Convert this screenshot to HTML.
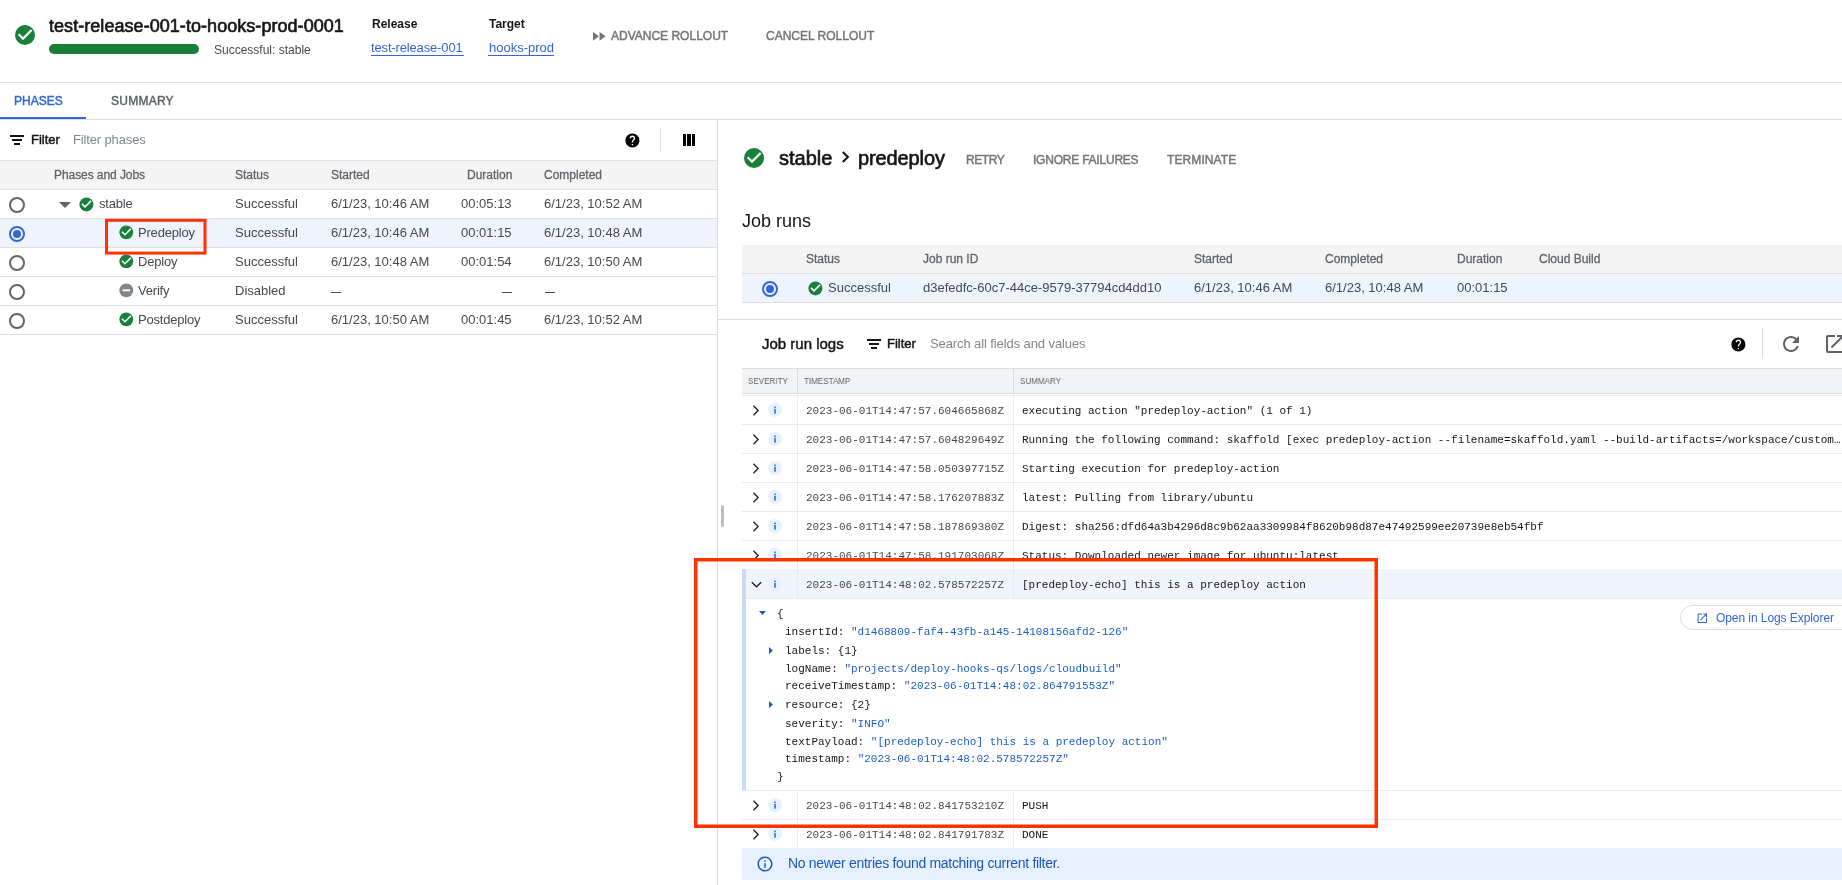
<!DOCTYPE html><html><head><meta charset="utf-8"><style>
html,body{margin:0;padding:0;width:1842px;height:885px;overflow:hidden;background:#fff;}
body{position:relative;font-family:"Liberation Sans", sans-serif;}
.t{position:absolute;white-space:nowrap;will-change:transform;}
.r{position:absolute;}
.i{position:absolute;display:block;overflow:visible;}
</style></head><body>
<svg class="i" style="left:13.0px;top:23.0px" width="24.0" height="24.0" viewBox="0 0 24 24" fill="#000"><circle cx="12" cy="12" r="10" fill="#188038"/><path d="M10 17.2l-5.1-5.1 1.6-1.6 3.5 3.5 7.8-7.8 1.6 1.6z" fill="#fff"/></svg>
<div class="t" style="left:49.00px;top:16.76px;font-size:18px;line-height:18px;color:#141517;letter-spacing:0.05px;-webkit-text-stroke:0.65px currentColor;">test-release-001-to-hooks-prod-0001</div>
<div class="r" style="left:49px;top:44px;width:150px;height:10px;background:#188038;border-radius:5px;"></div>
<div class="t" style="left:214.30px;top:43.84px;font-size:12px;line-height:12px;color:#46494d;">Successful: stable</div>
<div class="t" style="left:371.70px;top:17.54px;font-size:12px;line-height:12px;color:#141517;font-weight:700;">Release</div>
<div class="t" style="left:371.40px;top:41.00px;font-size:13px;line-height:13px;color:#3367d6;letter-spacing:-0.15px;">test-release-001</div>
<div class="r" style="left:371px;top:55px;width:93px;height:1px;background:#3367d6;"></div>
<div class="t" style="left:489.00px;top:17.54px;font-size:12px;line-height:12px;color:#141517;font-weight:700;">Target</div>
<div class="t" style="left:488.70px;top:41.00px;font-size:13px;line-height:13px;color:#3367d6;">hooks-prod</div>
<div class="r" style="left:488px;top:55px;width:66px;height:1px;background:#3367d6;"></div>
<svg class="i" style="left:593px;top:31.5px" width="13" height="8.7" viewBox="0 0 13 8.7" fill="#757575"><path d="M0 0l6 4.35L0 8.7z M6.6 0l6 4.35L6.6 8.7z"/></svg>
<div class="t" style="left:611.30px;top:30.04px;font-size:12px;line-height:12px;color:#757575;-webkit-text-stroke:0.45px currentColor;">ADVANCE ROLLOUT</div>
<div class="t" style="left:765.50px;top:30.04px;font-size:12px;line-height:12px;color:#757575;-webkit-text-stroke:0.45px currentColor;">CANCEL ROLLOUT</div>
<div class="r" style="left:0px;top:82px;width:1842px;height:1px;background:#dadce0;"></div>
<div class="t" style="left:13.60px;top:95.04px;font-size:12px;line-height:12px;color:#3367d6;-webkit-text-stroke:0.45px currentColor;">PHASES</div>
<div class="t" style="left:110.50px;top:95.04px;font-size:12px;line-height:12px;color:#5f6368;letter-spacing:0.25px;-webkit-text-stroke:0.45px currentColor;">SUMMARY</div>
<div class="r" style="left:0px;top:119px;width:1842px;height:1px;background:#dadce0;"></div>
<div class="r" style="left:0px;top:117px;width:86px;height:2px;background:#3367d6;"></div>
<div class="r" style="left:717px;top:120px;width:1px;height:765px;background:#dadce0;"></div>
<div class="r" style="left:10px;top:135px;width:14px;height:2px;background:#141517;"></div>
<div class="r" style="left:12px;top:139px;width:10px;height:2px;background:#141517;"></div>
<div class="r" style="left:14px;top:143px;width:6px;height:2px;background:#141517;"></div>
<div class="t" style="left:30.60px;top:133.00px;font-size:13px;line-height:13px;color:#141517;-webkit-text-stroke:0.45px currentColor;">Filter</div>
<div class="t" style="left:73.40px;top:133.00px;font-size:13px;line-height:13px;color:#80868b;letter-spacing:-0.14px;">Filter phases</div>
<svg class="i" style="left:623.6px;top:131.6px" width="16.8" height="16.8" viewBox="0 0 24 24" fill="#000"><path d="M12 2C6.48 2 2 6.48 2 12s4.48 10 10 10 10-4.48 10-10S17.52 2 12 2zm1 17h-2v-2h2v2zm2.07-7.75l-.9.92C13.45 12.9 13 13.5 13 15h-2v-.5c0-1.1.45-2.1 1.17-2.83l1.24-1.26c.37-.36.59-.86.59-1.41 0-1.1-.9-2-2-2s-2 .9-2 2H8c0-2.21 1.79-4 4-4s4 1.79 4 4c0 .88-.36 1.68-.93 2.25z"/></svg>
<div class="r" style="left:660px;top:128px;width:1px;height:24px;background:#dadce0;"></div>
<div class="r" style="left:683px;top:134px;width:3px;height:12px;background:#000;"></div>
<div class="r" style="left:687px;top:134px;width:4px;height:12px;background:#000;"></div>
<div class="r" style="left:692px;top:134px;width:3px;height:12px;background:#000;"></div>
<div class="r" style="left:0px;top:160px;width:717px;height:29px;background:#f4f4f4;"></div>
<div class="r" style="left:0px;top:160px;width:717px;height:1px;background:#e0e0e0;"></div>
<div class="r" style="left:0px;top:189px;width:717px;height:1px;background:#e0e0e0;"></div>
<div class="t" style="left:53.60px;top:168.84px;font-size:12px;line-height:12px;color:#5f6368;letter-spacing:-0.07px;-webkit-text-stroke:0.28px currentColor;">Phases and Jobs</div>
<div class="t" style="left:235.00px;top:168.84px;font-size:12px;line-height:12px;color:#5f6368;-webkit-text-stroke:0.28px currentColor;">Status</div>
<div class="t" style="left:330.70px;top:168.84px;font-size:12px;line-height:12px;color:#5f6368;-webkit-text-stroke:0.28px currentColor;">Started</div>
<div class="t" style="left:466.80px;top:168.84px;font-size:12px;line-height:12px;color:#5f6368;-webkit-text-stroke:0.28px currentColor;">Duration</div>
<div class="t" style="left:544.30px;top:168.84px;font-size:12px;line-height:12px;color:#5f6368;-webkit-text-stroke:0.28px currentColor;">Completed</div>
<div class="r" style="left:0px;top:218px;width:717px;height:1px;background:#e0e0e0;"></div>
<svg class="i" style="left:9px;top:196.7px" width="16" height="16" viewBox="0 0 16 16" fill="#000"><circle cx="8" cy="8" r="7" fill="none" stroke="#636466" stroke-width="2"/></svg>
<svg class="i" style="left:59px;top:202px" width="12" height="6" viewBox="0 0 12 6" fill="#5f6368"><path d="M0 0h12L6 6z"/></svg>
<svg class="i" style="left:77.6px;top:195.6px" width="16.8" height="16.8" viewBox="0 0 24 24" fill="#000"><circle cx="12" cy="12" r="10" fill="#188038"/><path d="M10 17.2l-5.1-5.1 1.6-1.6 3.5 3.5 7.8-7.8 1.6 1.6z" fill="#fff"/></svg>
<div class="t" style="left:98.70px;top:196.90px;font-size:13px;line-height:13px;color:#46494d;letter-spacing:-0.2px;">stable</div>
<div class="t" style="left:235.00px;top:196.90px;font-size:13px;line-height:13px;color:#46494d;">Successful</div>
<div class="t" style="left:330.70px;top:196.90px;font-size:13px;line-height:13px;color:#46494d;">6/1/23, 10:46 AM</div>
<div class="t" style="right:1330px;top:196.90px;font-size:13px;line-height:13px;color:#46494d">00:05:13</div>
<div class="t" style="left:544.30px;top:196.90px;font-size:13px;line-height:13px;color:#46494d;">6/1/23, 10:52 AM</div>
<div class="r" style="left:0px;top:219px;width:717px;height:28px;background:#eef3fd;"></div>
<div class="r" style="left:0px;top:247px;width:717px;height:1px;background:#e0e0e0;"></div>
<svg class="i" style="left:9px;top:225.7px" width="16" height="16" viewBox="0 0 16 16" fill="#000"><circle cx="8" cy="8" r="7" fill="none" stroke="#3367d6" stroke-width="2"/><circle cx="8" cy="8" r="4" fill="#3367d6"/></svg>
<svg class="i" style="left:117.72px;top:224.32px" width="16.560000000000002" height="16.560000000000002" viewBox="0 0 24 24" fill="#000"><circle cx="12" cy="12" r="10" fill="#188038"/><path d="M10 17.2l-5.1-5.1 1.6-1.6 3.5 3.5 7.8-7.8 1.6 1.6z" fill="#fff"/></svg>
<div class="t" style="left:138.00px;top:225.90px;font-size:13px;line-height:13px;color:#46494d;letter-spacing:-0.2px;">Predeploy</div>
<div class="t" style="left:235.00px;top:225.90px;font-size:13px;line-height:13px;color:#46494d;">Successful</div>
<div class="t" style="left:330.70px;top:225.90px;font-size:13px;line-height:13px;color:#46494d;">6/1/23, 10:46 AM</div>
<div class="t" style="right:1330px;top:225.90px;font-size:13px;line-height:13px;color:#46494d">00:01:15</div>
<div class="t" style="left:544.30px;top:225.90px;font-size:13px;line-height:13px;color:#46494d;">6/1/23, 10:48 AM</div>
<div class="r" style="left:0px;top:276px;width:717px;height:1px;background:#e0e0e0;"></div>
<svg class="i" style="left:9px;top:254.7px" width="16" height="16" viewBox="0 0 16 16" fill="#000"><circle cx="8" cy="8" r="7" fill="none" stroke="#636466" stroke-width="2"/></svg>
<svg class="i" style="left:117.72px;top:253.32000000000002px" width="16.560000000000002" height="16.560000000000002" viewBox="0 0 24 24" fill="#000"><circle cx="12" cy="12" r="10" fill="#188038"/><path d="M10 17.2l-5.1-5.1 1.6-1.6 3.5 3.5 7.8-7.8 1.6 1.6z" fill="#fff"/></svg>
<div class="t" style="left:138.00px;top:254.90px;font-size:13px;line-height:13px;color:#46494d;letter-spacing:-0.2px;">Deploy</div>
<div class="t" style="left:235.00px;top:254.90px;font-size:13px;line-height:13px;color:#46494d;">Successful</div>
<div class="t" style="left:330.70px;top:254.90px;font-size:13px;line-height:13px;color:#46494d;">6/1/23, 10:48 AM</div>
<div class="t" style="right:1330px;top:254.90px;font-size:13px;line-height:13px;color:#46494d">00:01:54</div>
<div class="t" style="left:544.30px;top:254.90px;font-size:13px;line-height:13px;color:#46494d;">6/1/23, 10:50 AM</div>
<div class="r" style="left:0px;top:305px;width:717px;height:1px;background:#e0e0e0;"></div>
<svg class="i" style="left:9px;top:283.7px" width="16" height="16" viewBox="0 0 16 16" fill="#000"><circle cx="8" cy="8" r="7" fill="none" stroke="#636466" stroke-width="2"/></svg>
<svg class="i" style="left:117.7px;top:282.3px" width="16.6" height="16.6" viewBox="0 0 24 24" fill="#000"><circle cx="12" cy="12" r="10" fill="#80868b"/><rect x="6.5" y="10.6" width="11" height="2.8" fill="#fff"/></svg>
<div class="t" style="left:138.00px;top:283.90px;font-size:13px;line-height:13px;color:#46494d;letter-spacing:-0.2px;">Verify</div>
<div class="t" style="left:235.00px;top:283.90px;font-size:13px;line-height:13px;color:#46494d;">Disabled</div>
<div class="r" style="left:330.5px;top:291.5px;width:10px;height:1px;background:#46494d;"></div>
<div class="r" style="left:502px;top:291.5px;width:10px;height:1px;background:#46494d;"></div>
<div class="r" style="left:544.5px;top:291.5px;width:10px;height:1px;background:#46494d;"></div>
<div class="r" style="left:0px;top:334px;width:717px;height:1px;background:#e0e0e0;"></div>
<svg class="i" style="left:9px;top:312.7px" width="16" height="16" viewBox="0 0 16 16" fill="#000"><circle cx="8" cy="8" r="7" fill="none" stroke="#636466" stroke-width="2"/></svg>
<svg class="i" style="left:117.72px;top:311.32000000000005px" width="16.560000000000002" height="16.560000000000002" viewBox="0 0 24 24" fill="#000"><circle cx="12" cy="12" r="10" fill="#188038"/><path d="M10 17.2l-5.1-5.1 1.6-1.6 3.5 3.5 7.8-7.8 1.6 1.6z" fill="#fff"/></svg>
<div class="t" style="left:138.00px;top:312.90px;font-size:13px;line-height:13px;color:#46494d;letter-spacing:-0.2px;">Postdeploy</div>
<div class="t" style="left:235.00px;top:312.90px;font-size:13px;line-height:13px;color:#46494d;">Successful</div>
<div class="t" style="left:330.70px;top:312.90px;font-size:13px;line-height:13px;color:#46494d;">6/1/23, 10:50 AM</div>
<div class="t" style="right:1330px;top:312.90px;font-size:13px;line-height:13px;color:#46494d">00:01:45</div>
<div class="t" style="left:544.30px;top:312.90px;font-size:13px;line-height:13px;color:#46494d;">6/1/23, 10:52 AM</div>
<svg class="i" style="left:742.0px;top:146.0px" width="24.0" height="24.0" viewBox="0 0 24 24" fill="#000"><circle cx="12" cy="12" r="10" fill="#188038"/><path d="M10 17.2l-5.1-5.1 1.6-1.6 3.5 3.5 7.8-7.8 1.6 1.6z" fill="#fff"/></svg>
<div class="t" style="left:778.60px;top:148.07px;font-size:20px;line-height:20px;color:#141517;-webkit-text-stroke:0.65px currentColor;">stable</div>
<svg class="i" style="left:838.5px;top:151px" width="12" height="12" viewBox="0 0 12 12" fill="#000"><path d="M3.8 0.9L8.9 6 3.8 11.1" fill="none" stroke="#141517" stroke-width="2.1"/></svg>
<div class="t" style="left:857.80px;top:148.07px;font-size:20px;line-height:20px;color:#141517;letter-spacing:-0.12px;-webkit-text-stroke:0.65px currentColor;">predeploy</div>
<div class="t" style="left:965.50px;top:153.84px;font-size:12px;line-height:12px;color:#757575;letter-spacing:-0.4px;-webkit-text-stroke:0.45px currentColor;">RETRY</div>
<div class="t" style="left:1032.70px;top:153.84px;font-size:12px;line-height:12px;color:#757575;letter-spacing:-0.22px;-webkit-text-stroke:0.45px currentColor;">IGNORE FAILURES</div>
<div class="t" style="left:1167.40px;top:153.84px;font-size:12px;line-height:12px;color:#757575;letter-spacing:0.1px;-webkit-text-stroke:0.45px currentColor;">TERMINATE</div>
<div class="t" style="left:742.40px;top:211.76px;font-size:18px;line-height:18px;color:#141517;">Job runs</div>
<div class="r" style="left:742px;top:245px;width:1100px;height:28px;background:#f4f4f4;"></div>
<div class="r" style="left:742px;top:273px;width:1100px;height:1px;background:#e0e0e0;"></div>
<div class="r" style="left:742px;top:274px;width:1100px;height:28px;background:#eef3fd;"></div>
<div class="r" style="left:742px;top:302px;width:1100px;height:1px;background:#e0e0e0;"></div>
<div class="t" style="left:806.40px;top:252.64px;font-size:12px;line-height:12px;color:#5f6368;-webkit-text-stroke:0.28px currentColor;">Status</div>
<div class="t" style="left:923.00px;top:252.64px;font-size:12px;line-height:12px;color:#5f6368;-webkit-text-stroke:0.28px currentColor;">Job run ID</div>
<div class="t" style="left:1193.70px;top:252.64px;font-size:12px;line-height:12px;color:#5f6368;-webkit-text-stroke:0.28px currentColor;">Started</div>
<div class="t" style="left:1325.40px;top:252.64px;font-size:12px;line-height:12px;color:#5f6368;-webkit-text-stroke:0.28px currentColor;">Completed</div>
<div class="t" style="left:1456.80px;top:252.64px;font-size:12px;line-height:12px;color:#5f6368;-webkit-text-stroke:0.28px currentColor;">Duration</div>
<div class="t" style="left:1539.00px;top:252.64px;font-size:12px;line-height:12px;color:#5f6368;-webkit-text-stroke:0.28px currentColor;">Cloud Build</div>
<svg class="i" style="left:762px;top:280.5px" width="16" height="16" viewBox="0 0 16 16" fill="#000"><circle cx="8" cy="8" r="7" fill="none" stroke="#3367d6" stroke-width="2"/><circle cx="8" cy="8" r="4" fill="#3367d6"/></svg>
<svg class="i" style="left:806.6px;top:279.6px" width="16.8" height="16.8" viewBox="0 0 24 24" fill="#000"><circle cx="12" cy="12" r="10" fill="#188038"/><path d="M10 17.2l-5.1-5.1 1.6-1.6 3.5 3.5 7.8-7.8 1.6 1.6z" fill="#fff"/></svg>
<div class="t" style="left:827.50px;top:281.00px;font-size:13px;line-height:13px;color:#46494d;">Successful</div>
<div class="t" style="left:922.80px;top:281.00px;font-size:13px;line-height:13px;color:#46494d;">d3efedfc-60c7-44ce-9579-37794cd4dd10</div>
<div class="t" style="left:1193.70px;top:281.00px;font-size:13px;line-height:13px;color:#46494d;">6/1/23, 10:46 AM</div>
<div class="t" style="left:1325.40px;top:281.00px;font-size:13px;line-height:13px;color:#46494d;">6/1/23, 10:48 AM</div>
<div class="t" style="left:1456.80px;top:281.00px;font-size:13px;line-height:13px;color:#46494d;">00:01:15</div>
<div class="r" style="left:717px;top:319px;width:1125px;height:1px;background:#dadce0;"></div>
<div class="t" style="left:762.40px;top:335.70px;font-size:15px;line-height:15px;color:#141517;-webkit-text-stroke:0.45px currentColor;">Job run logs</div>
<div class="r" style="left:867px;top:339px;width:14px;height:2px;background:#141517;"></div>
<div class="r" style="left:869px;top:343px;width:10px;height:2px;background:#141517;"></div>
<div class="r" style="left:871px;top:347px;width:6px;height:2px;background:#141517;"></div>
<div class="t" style="left:887.40px;top:337.20px;font-size:13px;line-height:13px;color:#141517;-webkit-text-stroke:0.45px currentColor;">Filter</div>
<div class="t" style="left:930.40px;top:337.20px;font-size:13px;line-height:13px;color:#80868b;letter-spacing:-0.1px;">Search all fields and values</div>
<svg class="i" style="left:1729.6px;top:335.6px" width="16.8" height="16.8" viewBox="0 0 24 24" fill="#000"><path d="M12 2C6.48 2 2 6.48 2 12s4.48 10 10 10 10-4.48 10-10S17.52 2 12 2zm1 17h-2v-2h2v2zm2.07-7.75l-.9.92C13.45 12.9 13 13.5 13 15h-2v-.5c0-1.1.45-2.1 1.17-2.83l1.24-1.26c.37-.36.59-.86.59-1.41 0-1.1-.9-2-2-2s-2 .9-2 2H8c0-2.21 1.79-4 4-4s4 1.79 4 4c0 .88-.36 1.68-.93 2.25z"/></svg>
<div class="r" style="left:1762px;top:328px;width:1px;height:31px;background:#dadce0;"></div>
<svg class="i" style="left:1779px;top:332px" width="24" height="24" viewBox="0 0 24 24" fill="#5f6368"><path d="M17.65 6.35C16.2 4.9 14.21 4 12 4c-4.42 0-7.99 3.58-7.99 8s3.57 8 7.99 8c3.730 0 6.84-2.55 7.73-6h-2.08c-.82 2.33-3.04 4-5.65 4-3.31 0-6-2.69-6-6s2.69-6 6-6c1.66 0 3.14.69 4.22 1.78L13 11h7V4l-2.35 2.35z"/></svg>
<svg class="i" style="left:1823px;top:332px" width="24" height="24" viewBox="0 0 24 24" fill="#5f6368"><path d="M19 19H5V5h7V3H5c-1.11 0-2 .9-2 2v14c0 1.1.89 2 2 2h14c1.1 0 2-.9 2-2v-7h-2v7zM14 3v2h3.59l-9.83 9.83 1.41 1.41L19 6.41V10h2V3h-7z"/></svg>
<div class="r" style="left:742px;top:368px;width:1100px;height:1px;background:#dadce0;"></div>
<div class="r" style="left:742px;top:369px;width:1100px;height:24px;background:#f1f3f4;"></div>
<div class="r" style="left:742px;top:393px;width:1100px;height:1px;background:#dadce0;"></div>
<div class="r" style="left:797px;top:369px;width:1px;height:24px;background:#dadce0;"></div>
<div class="r" style="left:1013px;top:369px;width:1px;height:24px;background:#dadce0;"></div>
<div class="r" style="left:742px;top:395px;width:1100px;height:1px;background:#e8eaed;"></div>
<div class="t" style="left:748.00px;top:375.87px;font-size:9.6px;line-height:9.6px;color:#5f6368;transform:scaleX(0.84);transform-origin:0 0;">SEVERITY</div>
<div class="t" style="left:804.40px;top:375.87px;font-size:9.6px;line-height:9.6px;color:#5f6368;transform:scaleX(0.84);transform-origin:0 0;">TIMESTAMP</div>
<div class="t" style="left:1019.70px;top:375.87px;font-size:9.6px;line-height:9.6px;color:#5f6368;transform:scaleX(0.84);transform-origin:0 0;">SUMMARY</div>
<div class="r" style="left:797px;top:395px;width:1px;height:29px;background:#e8eaed;"></div>
<div class="r" style="left:1013px;top:395px;width:1px;height:29px;background:#e8eaed;"></div>
<svg class="i" style="left:751.5px;top:404.5px" width="8" height="11" viewBox="0 0 8 11" fill="#000"><path d="M1.5 0.8l4.6 4.7L1.5 10.2" fill="none" stroke="#202124" stroke-width="1.35"/></svg>
<svg class="i" style="left:768px;top:402.5px" width="14" height="14" viewBox="0 0 14 14" fill="#000"><circle cx="7" cy="7" r="7" fill="#e8f0fe"/><rect x="6.2" y="3.6" width="1.6" height="1.6" fill="#1a73e8"/><rect x="6.2" y="6" width="1.6" height="4.6" fill="#1a73e8"/></svg>
<div class="t" style="left:806.00px;top:405.57px;font-size:11px;line-height:11px;color:#46494d;font-family:'Liberation Mono', monospace;">2023-06-01T14:47:57.604665868Z</div>
<div class="t" style="left:1022.00px;top:405.57px;font-size:11px;line-height:11px;color:#141517;font-family:'Liberation Mono', monospace;">executing action "predeploy-action" (1 of 1)</div>
<div class="r" style="left:742px;top:424px;width:1100px;height:1px;background:#e8eaed;"></div>
<div class="r" style="left:797px;top:424px;width:1px;height:29px;background:#e8eaed;"></div>
<div class="r" style="left:1013px;top:424px;width:1px;height:29px;background:#e8eaed;"></div>
<svg class="i" style="left:751.5px;top:433.5px" width="8" height="11" viewBox="0 0 8 11" fill="#000"><path d="M1.5 0.8l4.6 4.7L1.5 10.2" fill="none" stroke="#202124" stroke-width="1.35"/></svg>
<svg class="i" style="left:768px;top:431.5px" width="14" height="14" viewBox="0 0 14 14" fill="#000"><circle cx="7" cy="7" r="7" fill="#e8f0fe"/><rect x="6.2" y="3.6" width="1.6" height="1.6" fill="#1a73e8"/><rect x="6.2" y="6" width="1.6" height="4.6" fill="#1a73e8"/></svg>
<div class="t" style="left:806.00px;top:434.57px;font-size:11px;line-height:11px;color:#46494d;font-family:'Liberation Mono', monospace;">2023-06-01T14:47:57.604829649Z</div>
<div class="t" style="left:1022.00px;top:434.57px;font-size:11px;line-height:11px;color:#141517;font-family:'Liberation Mono', monospace;">Running the following command: skaffold [exec predeploy-action --filename=skaffold.yaml --build-artifacts=/workspace/custom…</div>
<div class="r" style="left:742px;top:453px;width:1100px;height:1px;background:#e8eaed;"></div>
<div class="r" style="left:797px;top:453px;width:1px;height:29px;background:#e8eaed;"></div>
<div class="r" style="left:1013px;top:453px;width:1px;height:29px;background:#e8eaed;"></div>
<svg class="i" style="left:751.5px;top:462.5px" width="8" height="11" viewBox="0 0 8 11" fill="#000"><path d="M1.5 0.8l4.6 4.7L1.5 10.2" fill="none" stroke="#202124" stroke-width="1.35"/></svg>
<svg class="i" style="left:768px;top:460.5px" width="14" height="14" viewBox="0 0 14 14" fill="#000"><circle cx="7" cy="7" r="7" fill="#e8f0fe"/><rect x="6.2" y="3.6" width="1.6" height="1.6" fill="#1a73e8"/><rect x="6.2" y="6" width="1.6" height="4.6" fill="#1a73e8"/></svg>
<div class="t" style="left:806.00px;top:463.57px;font-size:11px;line-height:11px;color:#46494d;font-family:'Liberation Mono', monospace;">2023-06-01T14:47:58.050397715Z</div>
<div class="t" style="left:1022.00px;top:463.57px;font-size:11px;line-height:11px;color:#141517;font-family:'Liberation Mono', monospace;">Starting execution for predeploy-action</div>
<div class="r" style="left:742px;top:482px;width:1100px;height:1px;background:#e8eaed;"></div>
<div class="r" style="left:797px;top:482px;width:1px;height:29px;background:#e8eaed;"></div>
<div class="r" style="left:1013px;top:482px;width:1px;height:29px;background:#e8eaed;"></div>
<svg class="i" style="left:751.5px;top:491.5px" width="8" height="11" viewBox="0 0 8 11" fill="#000"><path d="M1.5 0.8l4.6 4.7L1.5 10.2" fill="none" stroke="#202124" stroke-width="1.35"/></svg>
<svg class="i" style="left:768px;top:489.5px" width="14" height="14" viewBox="0 0 14 14" fill="#000"><circle cx="7" cy="7" r="7" fill="#e8f0fe"/><rect x="6.2" y="3.6" width="1.6" height="1.6" fill="#1a73e8"/><rect x="6.2" y="6" width="1.6" height="4.6" fill="#1a73e8"/></svg>
<div class="t" style="left:806.00px;top:492.57px;font-size:11px;line-height:11px;color:#46494d;font-family:'Liberation Mono', monospace;">2023-06-01T14:47:58.176207883Z</div>
<div class="t" style="left:1022.00px;top:492.57px;font-size:11px;line-height:11px;color:#141517;font-family:'Liberation Mono', monospace;">latest: Pulling from library/ubuntu</div>
<div class="r" style="left:742px;top:511px;width:1100px;height:1px;background:#e8eaed;"></div>
<div class="r" style="left:797px;top:511px;width:1px;height:29px;background:#e8eaed;"></div>
<div class="r" style="left:1013px;top:511px;width:1px;height:29px;background:#e8eaed;"></div>
<svg class="i" style="left:751.5px;top:520.5px" width="8" height="11" viewBox="0 0 8 11" fill="#000"><path d="M1.5 0.8l4.6 4.7L1.5 10.2" fill="none" stroke="#202124" stroke-width="1.35"/></svg>
<svg class="i" style="left:768px;top:518.5px" width="14" height="14" viewBox="0 0 14 14" fill="#000"><circle cx="7" cy="7" r="7" fill="#e8f0fe"/><rect x="6.2" y="3.6" width="1.6" height="1.6" fill="#1a73e8"/><rect x="6.2" y="6" width="1.6" height="4.6" fill="#1a73e8"/></svg>
<div class="t" style="left:806.00px;top:521.57px;font-size:11px;line-height:11px;color:#46494d;font-family:'Liberation Mono', monospace;">2023-06-01T14:47:58.187869380Z</div>
<div class="t" style="left:1022.00px;top:521.57px;font-size:11px;line-height:11px;color:#141517;font-family:'Liberation Mono', monospace;">Digest: sha256:dfd64a3b4296d8c9b62aa3309984f8620b98d87e47492599ee20739e8eb54fbf</div>
<div class="r" style="left:742px;top:540px;width:1100px;height:1px;background:#e8eaed;"></div>
<div class="r" style="left:797px;top:540px;width:1px;height:29px;background:#e8eaed;"></div>
<div class="r" style="left:1013px;top:540px;width:1px;height:29px;background:#e8eaed;"></div>
<svg class="i" style="left:751.5px;top:549.5px" width="8" height="11" viewBox="0 0 8 11" fill="#000"><path d="M1.5 0.8l4.6 4.7L1.5 10.2" fill="none" stroke="#202124" stroke-width="1.35"/></svg>
<svg class="i" style="left:768px;top:547.5px" width="14" height="14" viewBox="0 0 14 14" fill="#000"><circle cx="7" cy="7" r="7" fill="#e8f0fe"/><rect x="6.2" y="3.6" width="1.6" height="1.6" fill="#1a73e8"/><rect x="6.2" y="6" width="1.6" height="4.6" fill="#1a73e8"/></svg>
<div class="t" style="left:806.00px;top:550.57px;font-size:11px;line-height:11px;color:#46494d;font-family:'Liberation Mono', monospace;">2023-06-01T14:47:58.191703068Z</div>
<div class="t" style="left:1022.00px;top:550.57px;font-size:11px;line-height:11px;color:#141517;font-family:'Liberation Mono', monospace;">Status: Downloaded newer image for ubuntu:latest</div>
<div class="r" style="left:742px;top:569px;width:1100px;height:1px;background:#e8eaed;"></div>
<div class="r" style="left:742px;top:569px;width:1100px;height:29px;background:#f0f4fc;"></div>
<div class="r" style="left:797px;top:569px;width:1px;height:29px;background:#e8eaed;"></div>
<div class="r" style="left:1013px;top:569px;width:1px;height:29px;background:#e8eaed;"></div>
<svg class="i" style="left:750.5px;top:580.5px" width="10" height="7" viewBox="0 0 10 7" fill="#000"><path d="M0.8 1.2l4.7 4.6 4.7-4.6" fill="none" stroke="#202124" stroke-width="1.35"/></svg>
<svg class="i" style="left:768px;top:576.5px" width="14" height="14" viewBox="0 0 14 14" fill="#000"><circle cx="7" cy="7" r="7" fill="#e8f0fe"/><rect x="6.2" y="3.6" width="1.6" height="1.6" fill="#1a73e8"/><rect x="6.2" y="6" width="1.6" height="4.6" fill="#1a73e8"/></svg>
<div class="t" style="left:806.00px;top:579.57px;font-size:11px;line-height:11px;color:#46494d;font-family:'Liberation Mono', monospace;">2023-06-01T14:48:02.578572257Z</div>
<div class="t" style="left:1022.00px;top:579.57px;font-size:11px;line-height:11px;color:#141517;font-family:'Liberation Mono', monospace;">[predeploy-echo] this is a predeploy action</div>
<div class="r" style="left:742px;top:598px;width:1100px;height:1px;background:#e8eaed;"></div>
<div class="r" style="left:742px;top:569px;width:4px;height:221px;background:#c6dafc;"></div>
<svg class="i" style="left:759.3px;top:611px" width="7" height="4" viewBox="0 0 7 4" fill="#1a5fc8"><path d="M0 0h7L3.5 4z"/></svg>
<div class="t" style="left:777.40px;top:608.77px;font-size:11px;line-height:11px;color:#141517;font-family:'Liberation Mono', monospace;">{</div>
<div class="t" style="left:784.80px;top:626.67px;font-size:11px;line-height:11px;color:#141517;font-family:'Liberation Mono', monospace;">insertId: <span style="color:#1a5fc8">"d1468809-faf4-43fb-a145-14108156afd2-126"</span></div>
<div class="t" style="left:784.80px;top:645.67px;font-size:11px;line-height:11px;color:#141517;font-family:'Liberation Mono', monospace;">labels: {1}</div>
<svg class="i" style="left:769.2px;top:646.5px" width="4" height="7.2" viewBox="0 0 4 7.2" fill="#1a5fc8"><path d="M0 0l4 3.6L0 7.2z"/></svg>
<div class="t" style="left:784.80px;top:663.57px;font-size:11px;line-height:11px;color:#141517;font-family:'Liberation Mono', monospace;">logName: <span style="color:#1a5fc8">"projects/deploy-hooks-qs/logs/cloudbuild"</span></div>
<div class="t" style="left:784.80px;top:681.37px;font-size:11px;line-height:11px;color:#141517;font-family:'Liberation Mono', monospace;">receiveTimestamp: <span style="color:#1a5fc8">"2023-06-01T14:48:02.864791553Z"</span></div>
<div class="t" style="left:784.80px;top:700.37px;font-size:11px;line-height:11px;color:#141517;font-family:'Liberation Mono', monospace;">resource: {2}</div>
<svg class="i" style="left:769.2px;top:701.1999999999999px" width="4" height="7.2" viewBox="0 0 4 7.2" fill="#1a5fc8"><path d="M0 0l4 3.6L0 7.2z"/></svg>
<div class="t" style="left:784.80px;top:718.57px;font-size:11px;line-height:11px;color:#141517;font-family:'Liberation Mono', monospace;">severity: <span style="color:#1a5fc8">"INFO"</span></div>
<div class="t" style="left:784.80px;top:736.57px;font-size:11px;line-height:11px;color:#141517;font-family:'Liberation Mono', monospace;">textPayload: <span style="color:#1a5fc8">"[predeploy-echo] this is a predeploy action"</span></div>
<div class="t" style="left:784.80px;top:754.37px;font-size:11px;line-height:11px;color:#141517;font-family:'Liberation Mono', monospace;">timestamp: <span style="color:#1a5fc8">"2023-06-01T14:48:02.578572257Z"</span></div>
<div class="t" style="left:777.20px;top:772.27px;font-size:11px;line-height:11px;color:#141517;font-family:'Liberation Mono', monospace;">}</div>
<div class="r" style="left:1680px;top:605px;width:200px;height:23px;border:1px solid #dadce0;border-radius:13px;"></div>
<svg class="i" style="left:1695.7px;top:611.5px" width="12.6" height="12.6" viewBox="0 0 24 24" fill="#3367d6"><path d="M19 19H5V5h7V3H5c-1.11 0-2 .9-2 2v14c0 1.1.89 2 2 2h14c1.1 0 2-.9 2-2v-7h-2v7zM14 3v2h3.59l-9.83 9.83 1.41 1.41L19 6.41V10h2V3h-7z"/></svg>
<div class="t" style="left:1715.80px;top:611.84px;font-size:12px;line-height:12px;color:#3367d6;letter-spacing:-0.07px;">Open in Logs Explorer</div>
<div class="r" style="left:742px;top:790px;width:1100px;height:1px;background:#e8eaed;"></div>
<div class="r" style="left:797px;top:790px;width:1px;height:29px;background:#e8eaed;"></div>
<div class="r" style="left:1013px;top:790px;width:1px;height:29px;background:#e8eaed;"></div>
<svg class="i" style="left:751.5px;top:799.5px" width="8" height="11" viewBox="0 0 8 11" fill="#000"><path d="M1.5 0.8l4.6 4.7L1.5 10.2" fill="none" stroke="#202124" stroke-width="1.35"/></svg>
<svg class="i" style="left:768px;top:797.5px" width="14" height="14" viewBox="0 0 14 14" fill="#000"><circle cx="7" cy="7" r="7" fill="#e8f0fe"/><rect x="6.2" y="3.6" width="1.6" height="1.6" fill="#1a73e8"/><rect x="6.2" y="6" width="1.6" height="4.6" fill="#1a73e8"/></svg>
<div class="t" style="left:806.00px;top:800.57px;font-size:11px;line-height:11px;color:#46494d;font-family:'Liberation Mono', monospace;">2023-06-01T14:48:02.841753210Z</div>
<div class="t" style="left:1022.00px;top:800.57px;font-size:11px;line-height:11px;color:#141517;font-family:'Liberation Mono', monospace;">PUSH</div>
<div class="r" style="left:742px;top:819px;width:1100px;height:1px;background:#e8eaed;"></div>
<div class="r" style="left:797px;top:819px;width:1px;height:29px;background:#e8eaed;"></div>
<div class="r" style="left:1013px;top:819px;width:1px;height:29px;background:#e8eaed;"></div>
<svg class="i" style="left:751.5px;top:828.5px" width="8" height="11" viewBox="0 0 8 11" fill="#000"><path d="M1.5 0.8l4.6 4.7L1.5 10.2" fill="none" stroke="#202124" stroke-width="1.35"/></svg>
<svg class="i" style="left:768px;top:826.5px" width="14" height="14" viewBox="0 0 14 14" fill="#000"><circle cx="7" cy="7" r="7" fill="#e8f0fe"/><rect x="6.2" y="3.6" width="1.6" height="1.6" fill="#1a73e8"/><rect x="6.2" y="6" width="1.6" height="4.6" fill="#1a73e8"/></svg>
<div class="t" style="left:806.00px;top:829.57px;font-size:11px;line-height:11px;color:#46494d;font-family:'Liberation Mono', monospace;">2023-06-01T14:48:02.841791783Z</div>
<div class="t" style="left:1022.00px;top:829.57px;font-size:11px;line-height:11px;color:#141517;font-family:'Liberation Mono', monospace;">DONE</div>
<div class="r" style="left:742px;top:848px;width:1100px;height:1px;background:#e8eaed;"></div>
<div class="r" style="left:742px;top:848px;width:1100px;height:32px;background:#e8f0fe;"></div>
<svg class="i" style="left:756px;top:855px" width="18" height="18" viewBox="0 0 24 24" fill="#185abc"><path d="M11 7h2v2h-2zm0 4h2v6h-2zm1-9C6.48 2 2 6.48 2 12s4.48 10 10 10 10-4.48 10-10S17.52 2 12 2zm0 18c-4.41 0-8-3.59-8-8s3.59-8 8-8 8 3.59 8 8-3.59 8-8 8z"/></svg>
<div class="t" style="left:788.40px;top:856.15px;font-size:14px;line-height:14px;color:#185abc;letter-spacing:-0.31px;">No newer entries found matching current filter.</div>
<div class="r" style="left:721px;top:505px;width:3px;height:22px;background:#bdbdbd;border-radius:2px;"></div>
<svg class="i" style="left:0;top:0" width="1842" height="885"><rect x="695.75" y="559.75" width="680.5" height="266.5" fill="none" stroke="#ff3300" stroke-width="3.5"/><rect x="106.5" y="220.3" width="98.5" height="32.8" fill="none" stroke="#ff3300" stroke-width="3"/></svg>
</body></html>
